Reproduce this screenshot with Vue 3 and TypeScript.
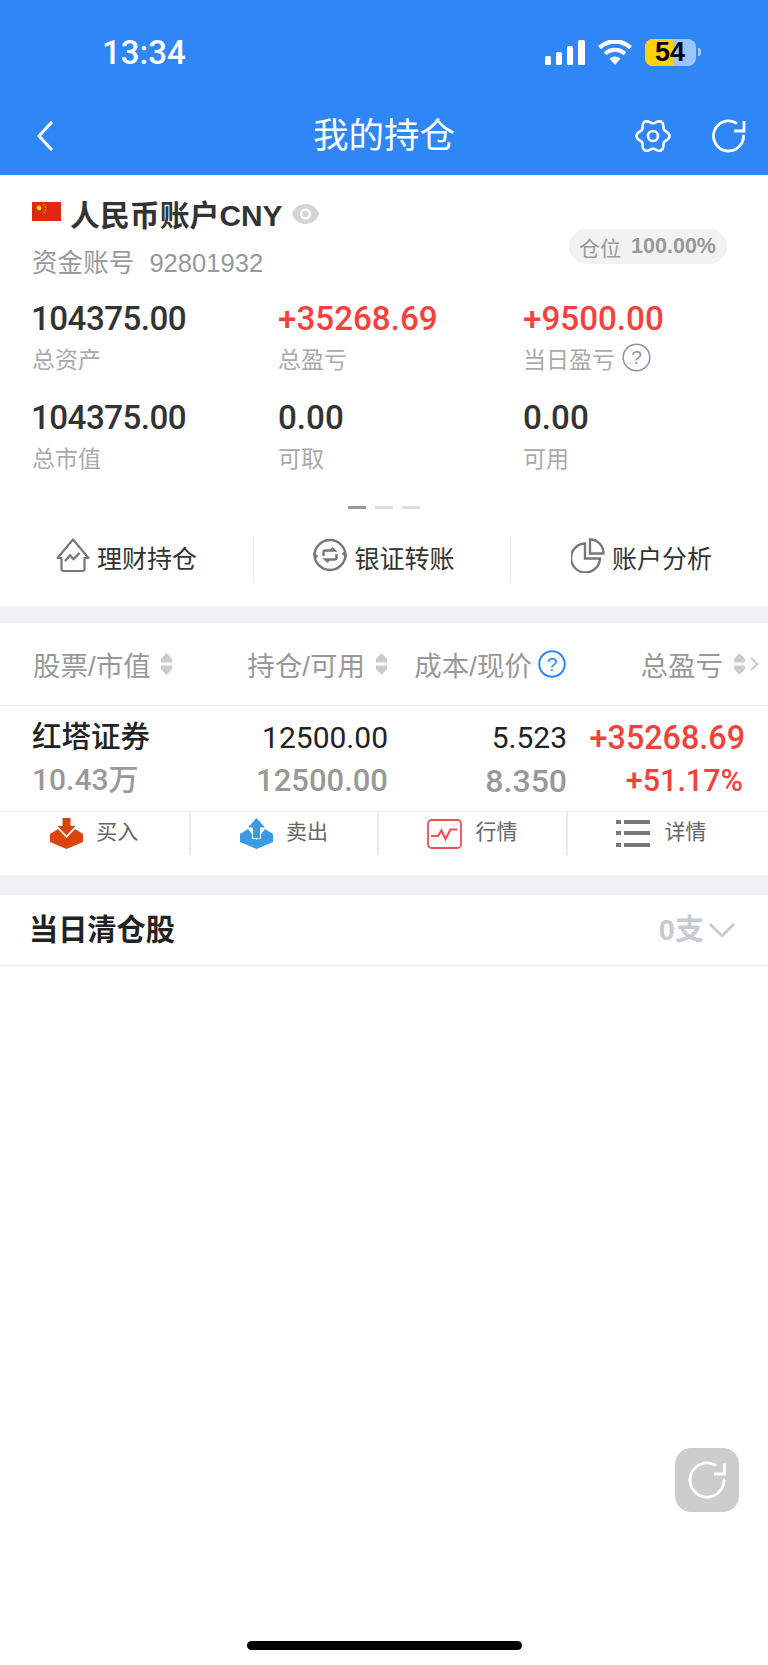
<script setup lang="ts">
interface Stat {
  value: string
  label: string
  up?: boolean
  help?: boolean
  tight?: boolean
}

const stats: Stat[] = [
  { value: '104375.00', label: '总资产', tight: true },
  { value: '+35268.69', label: '总盈亏', up: true },
  { value: '+9500.00', label: '当日盈亏', up: true, help: true },
  { value: '104375.00', label: '总市值', tight: true },
  { value: '0.00', label: '可取' },
  { value: '0.00', label: '可用' }
]

const signalBars = [9, 13, 19, 25]

// six-lobed outline for the settings button
const gearPath = (() => {
  const points: string[] = []
  for (let i = 0; i < 120; i++) {
    const t = (i / 120) * Math.PI * 2
    const r = 14.6 + 1.9 * Math.cos(6 * t)
    points.push(`${(18 + r * Math.cos(t)).toFixed(2)} ${(18 + r * Math.sin(t)).toFixed(2)}`)
  }
  return `M${points.join('L')}Z`
})()
</script>

<template>
  <div class="page">
    <header class="top">
      <div class="status">
        <span class="clock">13:34</span>
        <div class="signal">
          <i v-for="h in signalBars" :key="h" :style="{ height: h + 'px' }"></i>
        </div>
        <svg class="wifi" width="36" height="25" viewBox="0 0 35 25">
          <path d="M17.5 25 12 18.8a8 8 0 0 1 11 0Z" fill="#fff" />
          <path d="M7.6 13.8a14.6 14.6 0 0 1 19.8 0" fill="none" stroke="#fff" stroke-width="4.2" />
          <path d="M2 7.6a22.6 22.6 0 0 1 31 0" fill="none" stroke="#fff" stroke-width="4.4" />
        </svg>
        <div class="battery">
          <span class="battery-fill"></span>
          <b>54</b>
        </div>
        <span class="battery-nub"></span>
      </div>
      <nav class="nav">
        <svg class="back" width="17" height="30" viewBox="0 0 17 30">
          <path d="M15 2 3 15l12 13" fill="none" stroke="#fff" stroke-width="3.2" stroke-linecap="round" stroke-linejoin="round" />
        </svg>
        <h1>我的持仓</h1>
        <svg class="gear" width="36" height="36" viewBox="0 0 36 36">
          <path :d="gearPath" fill="none" stroke="#fff" stroke-width="2.6" stroke-linejoin="round" />
          <circle cx="18" cy="18" r="5" fill="none" stroke="#fff" stroke-width="2.6" />
        </svg>
        <svg class="reload" width="34" height="34" viewBox="0 0 34 34">
          <path d="M31.5 17A15 15 0 1 1 24 4" fill="none" stroke="#fff" stroke-width="2.8" stroke-linecap="round" />
          <path d="M32 2v10H22" fill="none" stroke="#fff" stroke-width="2.8" stroke-linejoin="miter" />
        </svg>
      </nav>
    </header>

    <section class="account">
      <div class="account-head">
        <svg class="flag" width="29" height="19" viewBox="0 0 29 19">
          <rect width="29" height="19" fill="#de2910" />
          <circle cx="7" cy="6" r="2.4" fill="#ffde00" />
          <circle cx="12" cy="2.5" r="0.8" fill="#ffde00" />
          <circle cx="13.5" cy="5" r="0.8" fill="#ffde00" />
          <circle cx="13.5" cy="8" r="0.8" fill="#ffde00" />
          <circle cx="12" cy="10.5" r="0.8" fill="#ffde00" />
        </svg>
        <span class="account-name">人民币账户CNY</span>
        <svg class="eye" width="27" height="20" viewBox="0 0 27 20">
          <path d="M0 10C2 4 7 0 13.500 0S25 4 27 10c-2 6-7 10-13.500 10S2 16 0 10Z" fill="#d4d4d4" />
          <circle cx="13.500" cy="10" r="5.500" fill="#fff" />
          <circle cx="13.500" cy="10" r="3.200" fill="#d4d4d4" />
        </svg>
      </div>
      <div class="account-sub">
        <span class="account-no">资金账号<em>92801932</em></span>
        <span class="ratio">仓位<b>100.00%</b></span>
      </div>

      <div class="stats">
        <div v-for="s in stats" :key="s.label" class="stat">
          <div class="stat-value" :class="{ up: s.up, tight: s.tight }">{{ s.value }}</div>
          <div class="stat-label">
            {{ s.label }}
            <svg v-if="s.help" class="stat-help" width="29" height="29" viewBox="0 0 29 29">
              <circle cx="14.500" cy="14.500" r="13.300" fill="none" stroke="#8b95a1" stroke-width="1.500" />
              <text x="14.500" y="21" text-anchor="middle" font-size="19" fill="#8b95a1" font-family="Liberation Sans, sans-serif">?</text>
            </svg>
          </div>
        </div>
      </div>

      <div class="pager">
        <i class="on"></i><i></i><i></i>
      </div>

      <div class="links">
        <div class="link">
          <svg width="34" height="34" viewBox="0 0 34 34" fill="none" stroke="#777" stroke-width="2.200">
            <path d="M5.500 20H1.500L17 1.500 32.500 20h-4v11a2 2 0 0 1-2 2H7.500a2 2 0 0 1-2-2Z" stroke-linejoin="round" />
            <path d="m9 23 5-5.500 3.500 3.500 6-6" stroke-width="2.400" />
          </svg>
          <span>理财持仓</span>
        </div>
        <div class="link">
          <svg width="34" height="34" viewBox="0 0 34 34" fill="none" stroke="#777" stroke-width="2.400">
            <path d="M1.500 17.500a15.500 15.500 0 0 1 31 0l-3-2.500" />
            <path d="M32.500 16.500a15.500 15.500 0 0 1-31 0l3 2.500" />
            <path d="M10.500 18v-3.500a2 2 0 0 1 2-2h9l-3-2.500" />
            <path d="M23.500 16v3.500a2 2 0 0 1-2 2h-9l3 2.500" />
          </svg>
          <span>银证转账</span>
        </div>
        <div class="link">
          <svg width="34" height="35" viewBox="0 0 34 35" fill="none" stroke="#777" stroke-width="2.400">
            <path d="M14 5.500A14.500 14.500 0 1 0 29 20.500H14Z" />
            <path d="M19 1.500c7.500 0 13.500 6 13.500 14H19Z" />
          </svg>
          <span>账户分析</span>
        </div>
      </div>
    </section>

    <div class="band"></div>

    <section class="holdings">
      <div class="thead">
        <div class="th th-name">
          股票/市值
          <svg class="sort" width="11" height="22" viewBox="0 0 11 22"><path d="M5.500 0 11 6v3.500H0V6ZM5.500 22 11 16v-3.500H0V16Z" fill="#ccc" /></svg>
        </div>
        <div class="th">
          持仓/可用
          <svg class="sort" width="11" height="22" viewBox="0 0 11 22"><path d="M5.500 0 11 6v3.500H0V6ZM5.500 22 11 16v-3.500H0V16Z" fill="#ccc" /></svg>
        </div>
        <div class="th th-cost">
          成本/现价
          <svg class="th-help" width="28" height="28" viewBox="0 0 28 28">
            <circle cx="14" cy="14" r="12.800" fill="none" stroke="#2f86f6" stroke-width="2" />
            <text x="14" y="20.500" text-anchor="middle" font-size="19" fill="#2f86f6" font-family="Liberation Sans, sans-serif">?</text>
          </svg>
        </div>
        <div class="th">
          总盈亏
          <svg class="sort" width="11" height="22" viewBox="0 0 11 22"><path d="M5.500 0 11 6v3.500H0V6ZM5.500 22 11 16v-3.500H0V16Z" fill="#ccc" /></svg>
        </div>
        <svg class="more" width="9" height="14" viewBox="0 0 9 14"><path d="m1 1 6.500 6L1 13" fill="none" stroke="#ccc" stroke-width="2" /></svg>
      </div>

      <div class="row">
        <div class="cell-name">
          <div class="stock">红塔证券</div>
          <div class="mv">10.43万</div>
        </div>
        <div class="cell"><span>12500.00</span><span class="sub sub-qty">12500.00</span></div>
        <div class="cell"><span>5.523</span><span class="sub">8.350</span></div>
        <div class="cell gain"><span>+35268.69</span><span class="pct">+51.17%</span></div>
      </div>

      <div class="actions">
        <div class="action">
          <svg width="33" height="31" viewBox="0 0 33 31">
            <path d="M0 16 8 11l8.500 9L25 11l8 5v8L16.500 31 0 24Z" fill="#d9440f" />
            <path d="M12.500 0h8v8h5L16.500 17.500 7.500 8h5Z" fill="#d9440f" stroke="#fff" stroke-width="2" paint-order="stroke" />
          </svg>
          <span>买入</span>
        </div>
        <div class="action">
          <svg width="33" height="31" viewBox="0 0 33 31">
            <path d="M0 16 8 11l8.500 11L25 11l8 5v8L16.500 31 0 24Z" fill="#3a9be2" />
            <path d="M16.500 0 25 9.500h-5V20h-7V9.500H8Z" fill="#3a9be2" stroke="#fff" stroke-width="2" paint-order="stroke" />
          </svg>
          <span>卖出</span>
        </div>
        <div class="action">
          <svg width="35" height="30" viewBox="0 0 35 30" fill="none" stroke="#ef4f55">
            <rect x="1" y="1" width="33" height="28" rx="3.500" stroke-width="1.800" />
            <path d="M4 17h7l3.500-5.500 4 8.500 5-9.500h7" stroke-width="2.200" />
          </svg>
          <span>行情</span>
        </div>
        <div class="action action-list">
          <svg width="34" height="27" viewBox="0 0 34 27" fill="#777">
            <rect y="0" width="5" height="4" /><rect x="8" y="0" width="26" height="4" />
            <rect y="11" width="5" height="4" /><rect x="8" y="11" width="26" height="4" />
            <rect y="23" width="5" height="4" /><rect x="8" y="23" width="26" height="4" />
          </svg>
          <span>详情</span>
        </div>
      </div>
    </section>

    <div class="band band-low"></div>

    <section class="cleared">
      <span class="cleared-title">当日清仓股</span>
      <span class="cleared-count">0支</span>
      <svg width="26" height="14" viewBox="0 0 26 14"><path d="m1 1 12 12L25 1" fill="none" stroke="#c6cad1" stroke-width="2.800" /></svg>
    </section>

    <button class="fab" type="button">
      <svg width="38" height="38" viewBox="0 0 38 38">
        <path d="M36 19A17 17 0 1 1 27 4" fill="none" stroke="#fff" stroke-width="2.800" stroke-linecap="round" />
        <path d="M36.500 2.500V13H26" fill="none" stroke="#fff" stroke-width="2.800" />
      </svg>
    </button>
    <div class="home-bar"></div>
  </div>
</template>

<style scoped>
.page {
  position: relative;
  width: 768px;
  height: 1665px;
  overflow: hidden;
  background: #fff;
  font-family: 'Liberation Sans', 'Noto Sans CJK SC', sans-serif;
}

.top {
  height: 175px;
  background: #2f86f6;
  color: #fff;
}

.status {
  display: flex;
  align-items: center;
  height: 104px;
}

.clock {
  width: 443px;
  padding-left: 102px;
  font: 500 33px Roboto, sans-serif;
}

.signal {
  display: flex;
  align-items: flex-end;
  gap: 4.800px;
  height: 25px;
}

.signal i {
  width: 6.300px;
  border-radius: 1.500px;
  background: #fff;
}

.wifi {
  margin-left: 12px;
}

.battery {
  position: relative;
  display: flex;
  align-items: center;
  justify-content: center;
  width: 51px;
  height: 27px;
  margin-left: 12px;
  border-radius: 8px;
  background: #9cc5fb;
  color: #000;
}

.battery-fill {
  position: absolute;
  left: 0;
  top: 0;
  bottom: 0;
  width: 28px;
  border-radius: 8px 0 0 8px;
  background: #ffd20a;
}

.battery b {
  position: relative;
  font-size: 27px;
  line-height: 27px;
}

.battery-nub {
  width: 3px;
  height: 8px;
  margin-left: 2px;
  border-radius: 0 2px 2px 0;
  background: #9cc5fb;
}

.nav {
  display: flex;
  align-items: center;
  height: 71px;
  padding-bottom: 7px;
  box-sizing: border-box;
}

.back {
  margin-left: 36px;
}

.nav h1 {
  width: 142px;
  margin: 0 0 0 260px;
  font-size: 35.500px;
  font-weight: 400;
  line-height: 42px;
  white-space: nowrap;
}

.gear {
  margin-left: 180px;
}

.reload {
  margin-left: 41px;
}

.account {
  height: 431px;
  padding: 0 0 0 32px;
  box-sizing: border-box;
}

.account-head {
  display: flex;
  align-items: center;
  height: 28px;
  padding-top: 27px;
}

.flag {
  margin-top: -10px;
}

.account-name {
  margin-left: 9px;
  color: #333;
  font-size: 29.900px;
  font-weight: 700;
  line-height: 34px;
  white-space: nowrap;
}

.eye {
  margin-left: 9px;
  margin-top: -4px;
}

.account-sub {
  display: flex;
  align-items: center;
  justify-content: space-between;
  height: 36px;
  margin-top: 7px;
  padding-right: 41px;
}

.account-no {
  color: #999;
  font-size: 25.600px;
  line-height: 36px;
  margin-top: 15px;
}

.account-no em {
  margin-left: 15px;
  font-style: normal;
}

.ratio {
  display: flex;
  align-items: center;
  gap: 10px;
  height: 35px;
  padding: 0 11px 0 10px;
  margin-top: -17px;
  border-radius: 18px;
  background: #f2f2f2;
  color: #999;
  font-size: 21px;
}

.ratio b {
  font-size: 21.500px;
}

.stats {
  display: grid;
  grid-template-columns: 246px 245px 1fr;
  row-gap: 28px;
  margin-top: 28px;
}

.stat-value {
  color: #333;
  font: 500 33.200px/36px Roboto, sans-serif;
  white-space: nowrap;
}

.stat-value.tight {
  margin-left: -1px;
  letter-spacing: -0.550px;
}

.stat-value.up {
  color: #f5413c;
}

.stat-label {
  display: flex;
  align-items: center;
  gap: 7px;
  height: 29px;
  margin-top: 6px;
  color: #aaa;
  font-size: 23px;
}

.pager {
  display: flex;
  justify-content: center;
  gap: 9px;
  margin: 35px 0 0 -32px;
}

.pager i {
  width: 18px;
  height: 2.500px;
  background: #ddd;
}

.pager i.on {
  background: #999;
}

.links {
  display: grid;
  grid-template-columns: 221px 257px 258px;
  margin: 27px 0 0 -32px;
  padding-left: 32px;
  height: 47px;
}

.link {
  display: flex;
  align-items: center;
  justify-content: center;
  gap: 7px;
  padding: 0 0 8px 4px;
  border-left: 1px solid #e6e6e6;
  color: #333;
  font-size: 25px;
}

.link:first-child {
  border-left: 0;
  margin-left: -32px;
  padding-left: 0;
  width: 253px;
}

.link span {
  margin-top: 3px;
}

.band {
  height: 17px;
  background: #f0f1f3;
}

.band-low {
  height: 20px;
}

.thead {
  position: relative;
  display: grid;
  grid-template-columns: 1fr 179px 179px 179px;
  align-items: center;
  height: 82px;
  padding: 0 23px 0 32px;
  border-bottom: 1px solid #ececec;
  color: #999;
  font-size: 27.500px;
}

.th {
  display: flex;
  align-items: center;
  justify-content: flex-end;
  gap: 11px;
  white-space: nowrap;
}

.th-name {
  justify-content: flex-start;
  gap: 10px;
  margin-left: 1px;
}

.th-cost {
  gap: 6px;
}

.sort {
  flex: none;
}

.more {
  position: absolute;
  right: 9px;
  top: 34px;
}

.row {
  display: grid;
  grid-template-columns: 1fr 179px 179px 179px;
  height: 106px;
  padding: 0 23px 0 32px;
  box-sizing: border-box;
  border-bottom: 1px solid #f0f0f0;
}

.stock {
  margin-top: 13px;
  color: #222;
  font-size: 29.500px;
  font-weight: 500;
  line-height: 36px;
}

.mv {
  margin-top: 7px;
  color: #999;
  font: 500 30px/36px Roboto, 'Noto Sans CJK SC', sans-serif;
}

.cell {
  display: flex;
  flex-direction: column;
  align-items: flex-end;
  padding-top: 14px;
  color: #222;
  font: 400 30px/36px Roboto, sans-serif;
  gap: 7px;
  white-space: nowrap;
  margin-right: -1px;
}

.cell .sub {
  color: #999;
  font-size: 32px;
  font-weight: 500;
}

.cell .sub-qty {
  font-size: 31px;
}

.cell.gain {
  margin-right: 0;
  font-size: 32.300px;
  font-weight: 500;
  color: #f5413c;
}

.cell .pct {
  margin-right: 2px;
  font-size: 30.500px;
}

.actions {
  display: grid;
  grid-template-columns: repeat(4, 188.600px) 1fr;
  height: 43px;
  margin-bottom: 20px;
}

.action {
  display: flex;
  align-items: center;
  justify-content: center;
  gap: 13px;
  border-left: 2px solid #e9e9e9;
  color: #666;
  font-size: 21px;
}

.action span {
  padding-bottom: 8px;
}

.action:first-child {
  border-left: 0;
}

.action-list {
  gap: 15px;
}

.cleared {
  display: flex;
  align-items: center;
  height: 70px;
  padding: 0 33px 0 29px;
  border-bottom: 1px solid #ececec;
}

.cleared-title {
  flex: 1;
  padding-bottom: 7px;
  color: #222;
  font-size: 29.200px;
  font-weight: 700;
}

.cleared-count {
  margin-right: 5px;
  padding-bottom: 7px;
  color: #c6cad1;
  font-size: 29px;
  font-weight: 700;
}

.fab {
  position: absolute;
  left: 675px;
  top: 1448px;
  display: flex;
  align-items: center;
  justify-content: center;
  width: 64px;
  height: 64px;
  padding: 0;
  border: 0;
  border-radius: 16px;
  background: #cdcdcd;
}

.home-bar {
  position: absolute;
  left: 247px;
  top: 1641px;
  width: 275px;
  height: 9px;
  border-radius: 5px;
  background: #000;
}
</style>
